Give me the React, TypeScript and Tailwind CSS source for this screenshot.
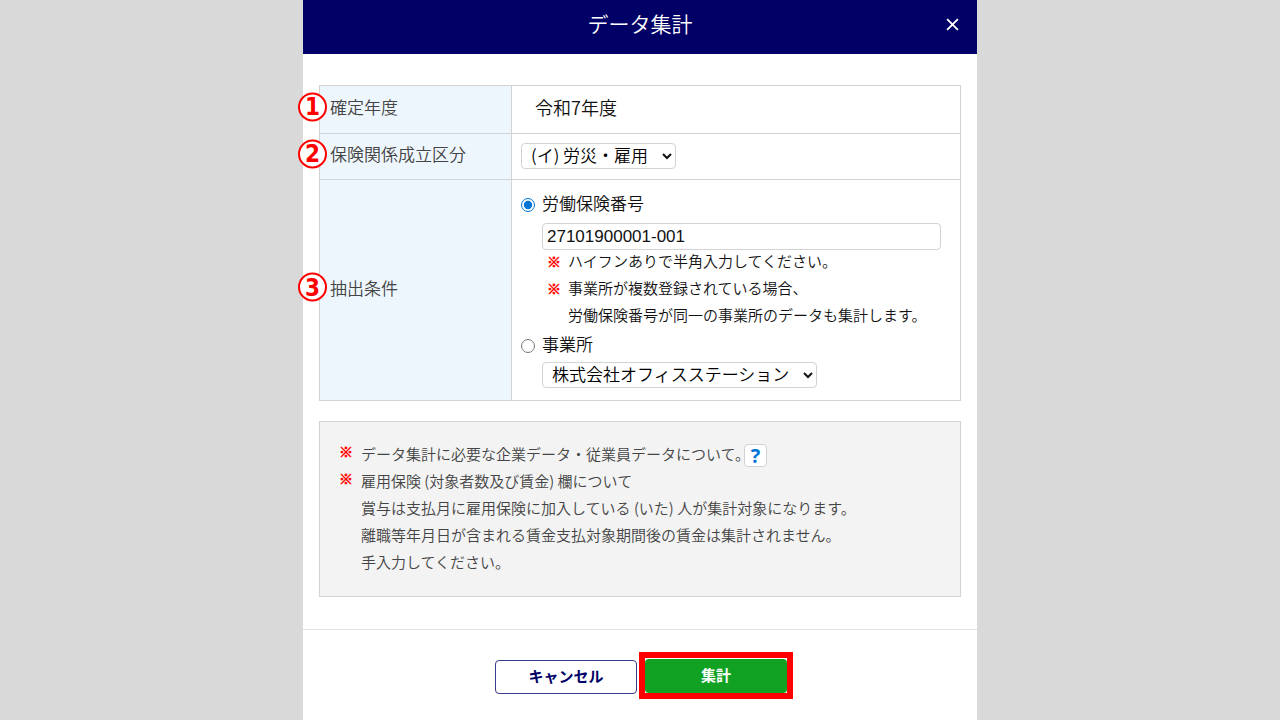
import type { ReactNode } from "react";
import { useState } from "react";

function StepBadge({ children }: { children: ReactNode }) {
  return (
    <span className="absolute top-1/2 -left-[22px] -mt-[3px] flex size-[29px] -translate-y-1/2 items-center justify-center rounded-full border-2 border-[#ff0000] bg-white font-['DejaVu_Sans_Condensed','DejaVu_Sans',sans-serif] text-2xl leading-none font-bold text-[#ff0000]">
      {children}
    </span>
  );
}

function Row({ step, title, children }: { step: number; title: string; children: ReactNode }) {
  return (
    <tr className="border border-[#d3d3d3]">
      <th
        scope="row"
        className="relative w-48 border-r border-[#d3d3d3] bg-[#eef6fd] pb-[5px] pl-[10px] text-left align-middle font-[350] text-[#444]"
      >
        <StepBadge>{step}</StepBadge>
        {title}
      </th>
      <td className="pr-[19px] pl-[9px] align-middle">{children}</td>
    </tr>
  );
}

function Select({ label, option }: { label: string; option: string }) {
  return (
    <span className="relative flex">
      <select
        aria-label={label}
        className="h-[26px] appearance-none rounded border border-[#d3d3d3] bg-white pr-[26px] pb-0.5 pl-[9px] leading-[22px] text-black"
      >
        <option>{option}</option>
      </select>
      <svg
        viewBox="0 0 10 7"
        className="pointer-events-none absolute top-[10px] right-1 h-[7px] w-[10px]"
        fill="none"
        stroke="#111"
        strokeWidth="2"
      >
        <path d="M1 1 5 5 9 1" />
      </svg>
    </span>
  );
}

function Mark() {
  return (
    <span className="w-[14px] shrink-0 text-sm leading-[22px] font-bold text-[#ff0000] [-webkit-text-stroke:0.6px_#ff0000]">
      ※
    </span>
  );
}

export default function App() {
  const [mode, setMode] = useState("number");
  return (
    <div className="flex min-h-screen justify-center bg-[#d9d9d9] font-['Noto_Sans_CJK_JP',sans-serif] font-[350] text-[#111]">
      <main className="flex w-full max-w-[674px] flex-col bg-white">
        <header className="grid h-[54px] grid-cols-[1fr_auto_1fr] items-center bg-[#000066] px-4 pb-[6px] text-white">
          <h1 className="col-start-2 text-[21px] font-[350]">データ集計</h1>
          <button type="button" aria-label="閉じる" className="justify-self-end p-0.5">
            <svg viewBox="0 0 14 14" className="size-[13px]" fill="none" stroke="currentColor" strokeWidth="2">
              <path d="M1.2 1.2 12.8 12.8M12.8 1.2 1.2 12.8" />
            </svg>
          </button>
        </header>

        <form className="flex flex-1 flex-col">
          <div className="flex flex-col gap-5 px-4 pt-[31px] pb-8">
            <table className="w-full border-collapse text-[17px] leading-6">
              <tbody>
                <Row step={1} title="確定年度">
                  <p className="pt-[9px] pb-[14px] pl-[14px] text-lg leading-6">令和7年度</p>
                </Row>
                <Row step={2} title="保険関係成立区分">
                  <div className="flex pt-[9px] pb-[10px]">
                    <Select label="保険関係成立区分" option="(イ) 労災・雇用" />
                  </div>
                </Row>
                <Row step={3} title="抽出条件">
                  <div className="flex flex-col pt-[11px] pb-3">
                    <label className="flex items-center gap-[7px]">
                      <input
                        type="radio"
                        name="mode"
                        checked={mode === "number"}
                        onChange={() => setMode("number")}
                        className="mt-[3px] size-[14px] accent-[#0075d8]"
                      />
                      労働保険番号
                    </label>
                    <div className="flex flex-col pt-2 pl-[21px]">
                      <input
                        type="text"
                        aria-label="労働保険番号"
                        defaultValue="27101900001-001"
                        className="h-[27px] w-full rounded border border-[#d3d3d3] px-1 font-['Liberation_Sans',sans-serif] font-normal"
                      />
                      <ul className="-mt-[3px] pb-[3px] pl-[5px] text-[15px] leading-[27px]">
                        <li className="flex gap-[7px]">
                          <span className="flex pt-[3px]">
                            <Mark />
                          </span>
                          ハイフンありで半角入力してください。
                        </li>
                        <li className="flex gap-[7px]">
                          <span className="flex pt-[3px]">
                            <Mark />
                          </span>
                          <span>
                            事業所が複数登録されている場合、
                            <br />
                            労働保険番号が同一の事業所のデータも集計します。
                          </span>
                        </li>
                      </ul>
                    </div>
                    <label className="mt-px flex items-center gap-[7px]">
                      <input
                        type="radio"
                        name="mode"
                        checked={mode === "office"}
                        onChange={() => setMode("office")}
                        className="mt-[3px] size-[14px] accent-[#0075d8]"
                      />
                      事業所
                    </label>
                    <div className="flex pt-[6px] pl-[21px]">
                      <Select label="事業所" option="株式会社オフィスステーション" />
                    </div>
                  </div>
                </Row>
              </tbody>
            </table>

            <ul className="border border-[#d3d3d3] bg-[#f3f3f3] px-[19px] pt-[18px] pb-[21px] text-[15px] leading-[27px] text-[#444]">
              <li className="flex gap-[8px]">
                <Mark />
                <span>データ集計に必要な企業データ・従業員データについて。</span>
                <button
                  type="button"
                  aria-label="ヘルプ"
                  className="mt-1 -ml-[14px] flex size-[23px] items-center justify-center rounded border border-[#d3d3d3] bg-white font-['Open_Sans',sans-serif] text-xl leading-none font-bold text-[#0075d8]"
                >
                  ?
                </button>
              </li>
              <li className="flex gap-[8px]">
                <Mark />
                <span>
                  雇用保険 (対象者数及び賃金) 欄について
                  <br />
                  賞与は支払月に雇用保険に加入している (いた) 人が集計対象になります。
                  <br />
                  離職等年月日が含まれる賃金支払対象期間後の賃金は集計されません。
                  <br />
                  手入力してください。
                </span>
              </li>
            </ul>
          </div>

          <footer className="flex flex-1 items-start justify-center gap-2 border-t border-[#e2e2e2] pt-[22px] pl-0.5 text-[15px] font-bold">
            <button
              type="button"
              className="mt-2 h-[34px] w-[142px] rounded border border-[#3a3a8a] bg-white pb-0.5 text-[#000066]"
            >
              キャンセル
            </button>
            <span className="-mx-1.5 flex border-6 border-[#ff0000] pt-px">
              <button type="submit" className="h-[34px] w-[142px] rounded bg-[#11a224] pb-px text-white">
                集計
              </button>
            </span>
          </footer>
        </form>
      </main>
    </div>
  );
}
